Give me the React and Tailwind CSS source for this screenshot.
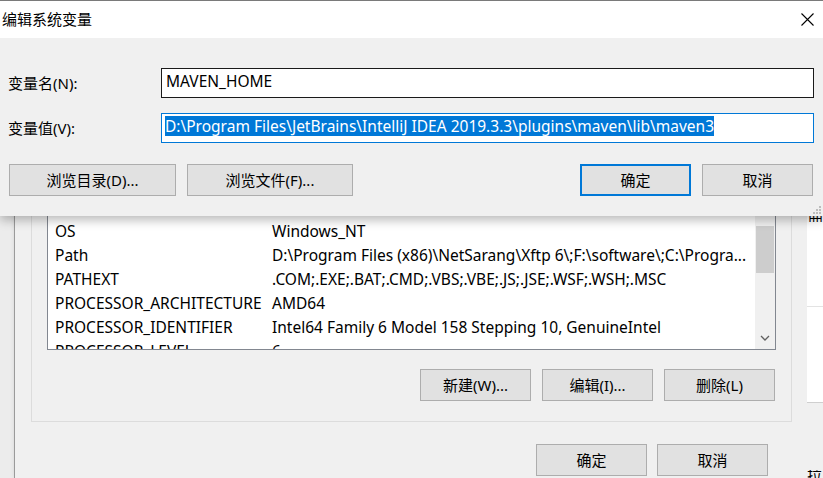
import React from 'react';

const font = { fontFamily: '"Segoe UI", "Noto Sans", "Noto Sans CJK SC", sans-serif' };

const rows = [
  ['OS', 'Windows_NT'],
  ['Path', 'D:\\Program Files (x86)\\NetSarang\\Xftp 6\\;F:\\software\\;C:\\Progra...'],
  ['PATHEXT', '.COM;.EXE;.BAT;.CMD;.VBS;.VBE;.JS;.JSE;.WSF;.WSH;.MSC'],
  ['PROCESSOR_ARCHITECTURE', 'AMD64'],
  ['PROCESSOR_IDENTIFIER', 'Intel64 Family 6 Model 158 Stepping 10, GenuineIntel'],
  ['PROCESSOR_LEVEL', '6'],
];

function WinButton({ children, className = '', primary = false }) {
  return (
    <button
      type="button"
      className={`flex h-[32px] items-center justify-center bg-[#e1e1e1] text-[15px] text-black ${
        primary ? 'border-2 border-[#0078d7]' : 'border border-[#adadad]'
      } ${className}`}
    >
      {children}
    </button>
  );
}

function BackDialog() {
  return (
    <div className="flex h-[478px] w-[823px]">
      <div className="w-[14px] bg-[#ececec]" />
      <div className="flex w-[793px] flex-col border-l border-[#9a9a9a] bg-[#f0f0f0] shadow-[3px_0_6px_rgba(0,0,0,0.3)]">
        <div className="ml-[16px] mt-[160px] flex h-[262px] w-[761px] flex-col border border-[#dcdcdc] pl-[15px] pr-[15px] pt-[29px]">
          <div className="flex h-[160px] w-[729px] overflow-hidden border border-[#828790] bg-white">
            <div className="flex-1 overflow-hidden">
              <div className="flex h-[29px] items-center pl-[8px] text-[15.5px]">
                <span className="w-[217px]">变量</span>
                <span>值</span>
              </div>
              {rows.map(([name, value]) => (
                <div key={name} className="flex h-[24px] items-center whitespace-nowrap pl-[7px] text-[15.5px] text-black">
                  <span className="w-[217px] shrink-0">{name}</span>
                  <span>{value}</span>
                </div>
              ))}
            </div>
            <div className="flex w-[20px] shrink-0 flex-col bg-[#f0f0f0]">
              <div className="h-[35px]" />
              <div className="mx-[1px] h-[47px] bg-[#cdcdcd]" />
              <div className="flex-1" />
              <div className="flex h-[22px] items-center justify-center">
                <svg width="10" height="6" viewBox="0 0 10 6" fill="none" stroke="#606060" strokeWidth="1.3">
                  <path d="M1 1l4 4 4-4" />
                </svg>
              </div>
            </div>
          </div>
          <div className="mt-[19px] flex justify-end gap-[11px] pr-[1px]">
            <WinButton className="w-[111px]">新建(W)...</WinButton>
            <WinButton className="w-[111px]">编辑(I)...</WinButton>
            <WinButton className="w-[111px]">删除(L)</WinButton>
          </div>
        </div>
        <div className="mt-[22px] flex justify-end gap-[10px] pr-[39px]">
          <WinButton className="w-[111px]">确定</WinButton>
          <WinButton className="w-[111px]">取消</WinButton>
        </div>
      </div>
      <div className="flex flex-1 flex-col bg-white">
        <div className="mt-[212px] h-[10px] overflow-hidden pl-[1px] text-[15px] leading-[10px]">曲</div>
        <div className="mt-[84px] border-t border-[#e3e3e3]" />
        <div className="h-[95px]" />
        <div className="flex flex-1 flex-col justify-end border-t border-[#cfcfcf] bg-[#f0f0f0] text-[15px] leading-[10px]">
          <div className="h-[8px] overflow-hidden">拉</div>
        </div>
      </div>
    </div>
  );
}

function FrontDialog() {
  return (
    <div className="absolute left-0 top-0 flex h-[216px] w-[823px] flex-col border-t border-[#7a7a7a] bg-[#f0f0f0] shadow-[0_4px_10px_rgba(0,0,0,0.28)]">
      <div className="flex h-[37px] items-center justify-between bg-white">
        <span className="pl-[2px] text-[15px] text-black">编辑系统变量</span>
        <svg className="mr-[9px]" width="13" height="13" viewBox="0 0 13 13" stroke="#000" strokeWidth="1.1">
          <path d="M0.5 0.5l12 12M12.5 0.5l-12 12" />
        </svg>
      </div>
      <div className="flex flex-col pl-[8px]">
        <div className="mt-[30px] flex items-center">
          <span className="w-[153px] text-[15px] text-black">变量名(N):</span>
          <div className="flex h-[30px] w-[653px] items-center border border-[#1a1a1a] bg-white pb-[3px] pl-[4px] text-[15.5px] text-black">
            MAVEN_HOME
          </div>
        </div>
        <div className="mt-[15px] flex items-center">
          <span className="w-[153px] text-[15px] text-black">变量值(V):</span>
          <div className="flex h-[30px] w-[653px] items-center border border-[#0078d7] bg-white pb-[4px] pl-[3px]">
            <span className="whitespace-nowrap bg-[#0078d7] text-[15.5px] leading-[20px] text-white">
              D:\Program Files\JetBrains\IntelliJ IDEA 2019.3.3\plugins\maven\lib\maven3
            </span>
          </div>
        </div>
        <div className="mt-[21px] flex items-center">
          <WinButton className="ml-[1px] w-[167px]">浏览目录(D)...</WinButton>
          <WinButton className="ml-[11px] w-[166px]">浏览文件(F)...</WinButton>
          <WinButton primary className="ml-[227px] w-[111px]">确定</WinButton>
          <WinButton className="ml-[11px] w-[111px]">取消</WinButton>
        </div>
      </div>
      <svg className="absolute bottom-[1px] right-[1px]" width="9" height="9" viewBox="0 0 9 9" fill="#bdbdbd">
        <rect x="6" y="0" width="2" height="2" />
        <rect x="3" y="3" width="2" height="2" />
        <rect x="6" y="3" width="2" height="2" />
        <rect x="0" y="6" width="2" height="2" />
        <rect x="3" y="6" width="2" height="2" />
        <rect x="6" y="6" width="2" height="2" />
      </svg>
    </div>
  );
}

export default function App() {
  return (
    <div className="relative h-[478px] w-[823px] overflow-hidden bg-[#f0f0f0]" style={font}>
      <BackDialog />
      <FrontDialog />
    </div>
  );
}
